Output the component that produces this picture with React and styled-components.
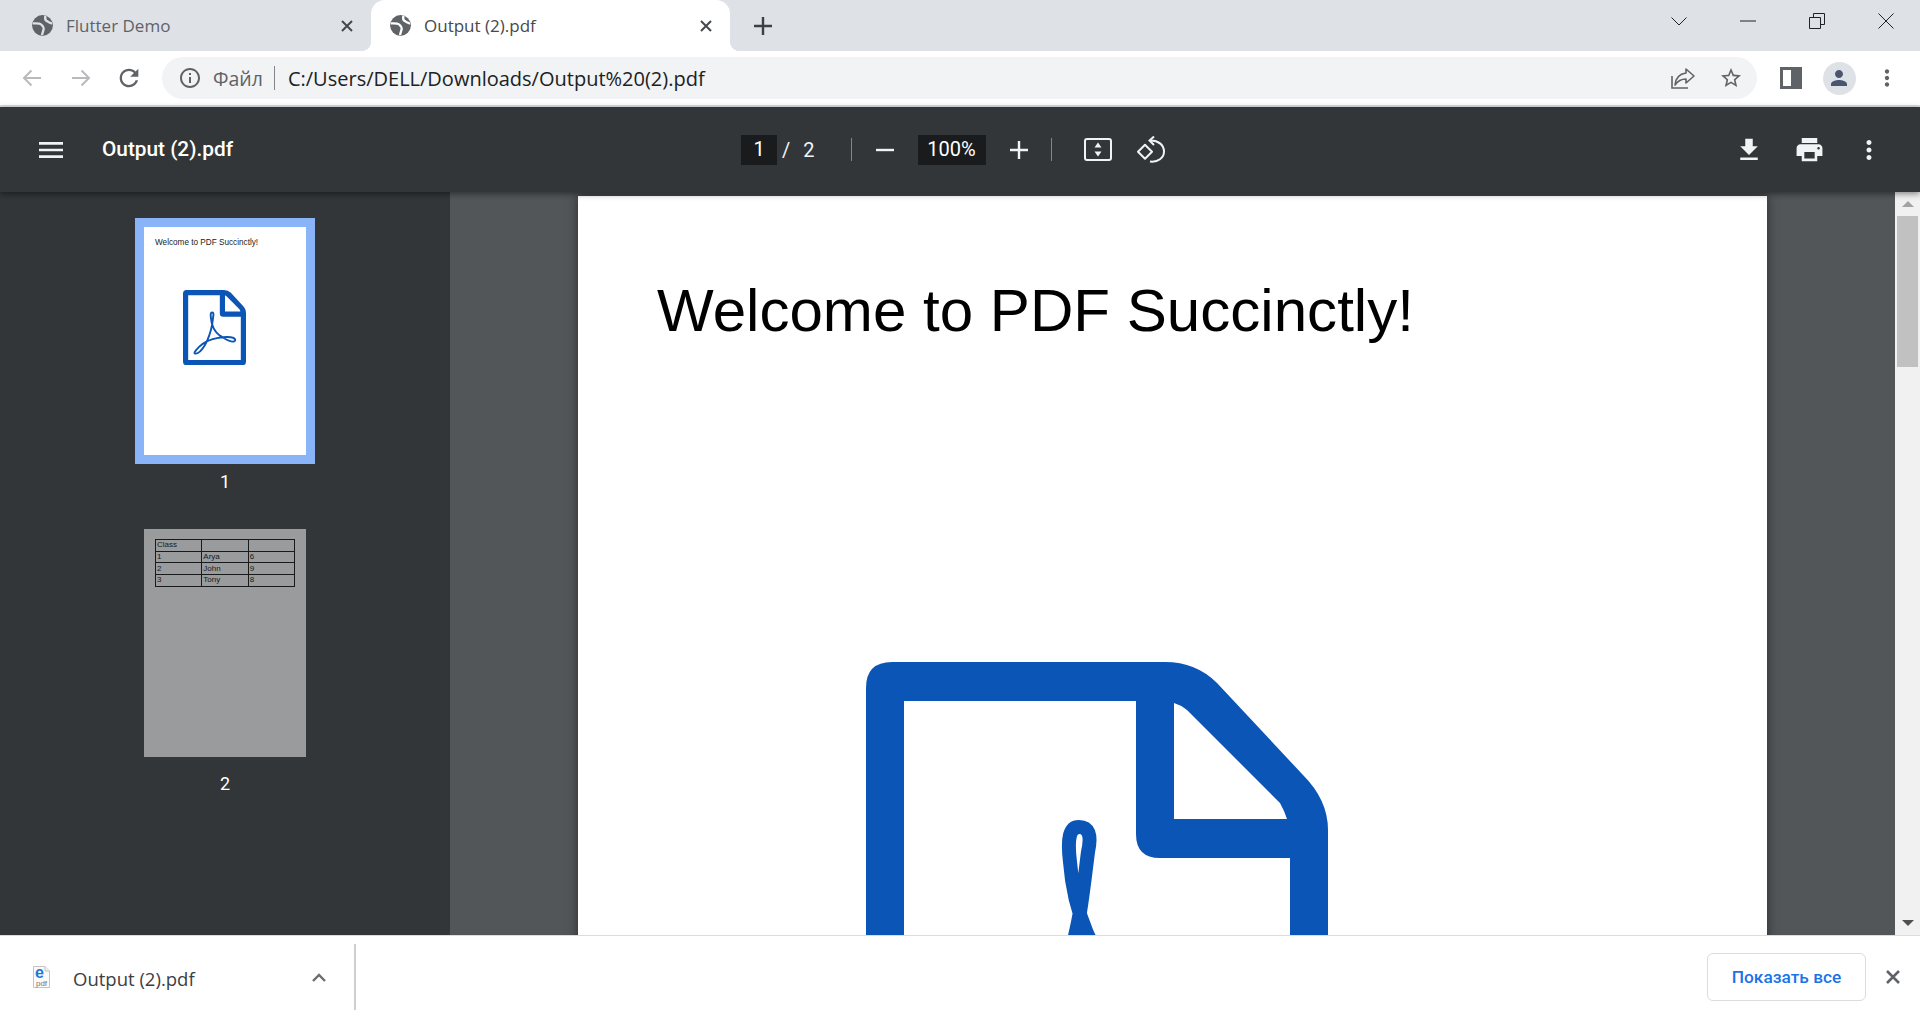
import React from 'react'
import styled, { createGlobalStyle } from 'styled-components'

const GlobalStyle = createGlobalStyle`
  html, body {
    margin: 0;
    padding: 0;
    height: 100%;
    overflow: hidden;
    background: #fff;
  }
  * {
    box-sizing: border-box;
  }
`

const PATHS = {
  reload: 'M17.65 6.35C16.2 4.9 14.21 4 12 4c-4.42 0-7.99 3.58-7.99 8s3.57 8 7.99 8c3.73 0 6.84-2.55 7.73-6h-2.08c-.82 2.33-3.04 4-5.65 4-3.31 0-6-2.69-6-6s2.69-6 6-6c1.66 0 3.14.69 4.22 1.78L13 11h7V4l-2.35 2.35z',
  info: 'M11 7h2v2h-2zm0 4h2v6h-2zm1-9C6.48 2 2 6.48 2 12s4.48 10 10 10 10-4.48 10-10S17.52 2 12 2zm0 18c-4.41 0-8-3.59-8-8s3.59-8 8-8 8 3.59 8 8-3.59 8-8 8z',
  star: 'M22 9.24l-7.19-.62L12 2 9.19 8.63 2 9.24l5.46 4.73L5.82 21 12 17.27 18.18 21l-1.63-7.03L22 9.24zM12 15.4l-3.76 2.27 1-4.28-3.32-2.88 4.38-.38L12 6.1l1.71 4.04 4.38.38-3.32 2.88 1 4.28L12 15.4z',
  person: 'M12 12c2.21 0 4-1.79 4-4s-1.79-4-4-4-4 1.79-4 4 1.79 4 4 4zm0 2c-2.67 0-8 1.34-8 4v2h16v-2c0-2.66-5.33-4-8-4z',
  menu: 'M3 18h18v-2H3v2zm0-5h18v-2H3v2zm0-7v2h18V6H3z',
  download: 'M19 9h-4V3H9v6H5l7 7 7-7zM5 18v2h14v-2H5z',
  print: 'M19 8H5c-1.66 0-3 1.34-3 3v6h4v4h12v-4h4v-6c0-1.66-1.34-3-3-3zm-3 11H8v-5h8v5zm3-7c-.55 0-1-.45-1-1s.45-1 1-1 1 .45 1 1-.45 1-1 1zm-1-9H6v4h12V3z',
  dots: 'M12 8c1.1 0 2-.9 2-2s-.9-2-2-2-2 .9-2 2 .9 2 2 2zm0 2c-1.1 0-2 .9-2 2s.9 2 2 2 2-.9 2-2-.9-2-2-2zm0 6c-1.1 0-2 .9-2 2s.9 2 2 2 2-.9 2-2-.9-2-2-2z'
}

function MaterialIcon ({ name, size = 24, color = 'currentColor' }) {
  return (
    <svg width={size} height={size} viewBox='0 0 24 24' fill={color}>
      <path d={PATHS[name]} />
    </svg>
  )
}

function LineIcon ({ size = 18, width = 2, color = 'currentColor', view = '0 0 18 18', children }) {
  return (
    <svg width={size} height={size} viewBox={view} fill='none' stroke={color} strokeWidth={width}>
      {children}
    </svg>
  )
}

function Globe ({ land }) {
  return (
    <svg width='25' height='25' viewBox='0 0 24 24' fill='none'>
      <circle cx='12' cy='12' r='10' fill='#5f6368' />
      <path
        stroke={land}
        strokeWidth='2.2'
        d='M2.6 10C6 9.8 9 9.6 10.4 10.8C12 12.2 13.4 13.2 13.2 15C13 17 11.8 18.6 11.6 21.4M14.8 2.6C14.4 4.4 14 6.2 15.6 7.4C17 8.6 19 9.6 21.2 10.2'
      />
    </svg>
  )
}

// the acrobat page drawing, same one for the big page and the thumbnail
function PdfDrawing ({ width }) {
  return (
    <svg width={width} viewBox='0 0 462 552' style={{ display: 'block' }} fill='none'>
      <path
        fill='#0a55b5'
        fillRule='evenodd'
        d='M26 0H299Q330 0 351 21L437 113Q462 138 462 168V526Q462 552 436 552H26Q0 552 0 526V26Q0 0 26 0ZM38 39V513H424V196H294Q270 196 270 172V39ZM308 41V157H421Q418 148 414 141L321 48Q315 43 308 41Z'
      />
      <path
        stroke='#0a55b5'
        strokeWidth='14'
        d='M222 190C226 172 222 165 213 165C204 165 201 175 204 200C207 240 222 300 271 335C300 350 340 385 372 378C392 372 385 350 350 346C300 340 200 355 145 395C100 430 74 462 88 466C105 470 135 445 160 405C185 360 205 300 214 250C218 225 220 205 222 190Z'
      />
    </svg>
  )
}

function FileGlyph () {
  return (
    <svg width='25' height='30' viewBox='-4 -4 25 30'>
      <path d='M.5.5H12L16.5 5V21.5H.5Z' fill='#fafafa' stroke='#c4c4c4' />
      <path d='M12 .5V5H16.5' fill='#eee' stroke='#c4c4c4' />
      <text x='6.5' y='11.5' fontFamily='Liberation Sans, sans-serif' fontWeight='700' fontSize='16' fill='#1a78d6' textAnchor='middle'>e</text>
      <text x='8.5' y='19.5' fontFamily='Liberation Sans, sans-serif' fontSize='8' fill='#777' textAnchor='middle'>pdf</text>
    </svg>
  )
}

function BrowserTab ({ title, width, paddingLeft, active }) {
  return (
    <Tab $width={width} $paddingLeft={paddingLeft} $active={active}>
      <Globe land={active ? '#fff' : '#dee1e6'} />
      <TabTitle>{title}</TabTitle>
      <LineIcon size={12} width={2} color='#45494d' view='0 0 12 12'>
        <path d='M1 1L11 11M11 1L1 11' />
      </LineIcon>
    </Tab>
  )
}

function ThumbRow ({ cells }) {
  return <tr>{cells.map((cell, i) => <ThumbCell key={i}>{cell}</ThumbCell>)}</tr>
}

export default function App () {
  return (
    <Window>
      <GlobalStyle />

      <TabStrip>
        <BrowserTab title='Flutter Demo' width={371} paddingLeft={30} />
        <BrowserTab title='Output (2).pdf' width={359} paddingLeft={17} active />
        <NewTab>
          <LineIcon size={18} width={2.4} color='#3c4043'>
            <path d='M9 0V18M0 9H18' />
          </LineIcon>
        </NewTab>
        <WindowControls>
          <ControlSlot>
            <LineIcon size={16} width={1} color='#222' view='0 0 16 16'><path d='M.5 4.5L8 12L15.5 4.5' /></LineIcon>
          </ControlSlot>
          <ControlSlot>
            <LineIcon size={16} width={1} color='#222' view='0 0 16 16'><path d='M0 8H16' /></LineIcon>
          </ControlSlot>
          <ControlSlot>
            <LineIcon size={16} width={1} color='#222' view='0 0 16 16'>
              <path d='M.5 4.5H11.5V15.5H.5ZM4.5 4V.5H15.5V11.5H12' />
            </LineIcon>
          </ControlSlot>
          <ControlSlot>
            <LineIcon size={16} width={1} color='#222' view='0 0 16 16'><path d='M.5 .5L15.5 15.5M15.5 .5L.5 15.5' /></LineIcon>
          </ControlSlot>
        </WindowControls>
      </TabStrip>

      <AddressRow>
        <NavSlot $width={48}>
          <LineIcon size={22} width={2} color='#b8babd' view='0 0 22 22'><path d='M20 11H3M10.5 3.5L3 11L10.5 18.5' /></LineIcon>
        </NavSlot>
        <NavSlot $width={49}>
          <LineIcon size={22} width={2} color='#b8babd' view='0 0 22 22'><path d='M2 11H19M11.5 3.5L19 11L11.5 18.5' /></LineIcon>
        </NavSlot>
        <NavSlot $width={48}><MaterialIcon name='reload' size={28} color='#5f6368' /></NavSlot>
        <Omnibox>
          <InfoSlot><MaterialIcon name='info' size={24} color='#5f6368' /></InfoSlot>
          <SchemeLabel>Файл</SchemeLabel>
          <OmniDivider />
          <UrlText>C:/Users/DELL/Downloads/Output%20(2).pdf</UrlText>
          <OmniActions>
            <NavSlot $width={24}>
              <svg width='24' height='22' viewBox='0 0 24 22' fill='none' stroke='#5f6368' strokeWidth='1.6'>
                <path d='M1 9V21H17' />
                <path d='M15 2L23 9L15 16V12C10 12 7 13.5 4 18C4.5 12 8 7 15 6Z' strokeLinejoin='round' />
              </svg>
            </NavSlot>
            <NavSlot $width={24}><MaterialIcon name='star' size={26} color='#5f6368' /></NavSlot>
          </OmniActions>
        </Omnibox>
        <ChromeActions>
          <NavSlot $width={48}><SidePanel /></NavSlot>
          <NavSlot $width={48}>
            <Avatar><MaterialIcon name='person' size={24} color='#4a5670' /></Avatar>
          </NavSlot>
          <NavSlot $width={48}><MaterialIcon name='dots' size={26} color='#5f6368' /></NavSlot>
        </ChromeActions>
      </AddressRow>

      <PdfToolbar>
        <ToolbarLeft>
          <MaterialIcon name='menu' size={32} color='#f1f3f4' />
          <DocTitle>Output (2).pdf</DocTitle>
        </ToolbarLeft>
        <InputBox $width={36}>1</InputBox>
        <Slash>/</Slash>
        <PageTotal>2</PageTotal>
        <ToolDivider $gap={36} />
        <ToolSlot $width={18} $left={24}>
          <LineIcon size={18} width={2.4} color='#f1f3f4'><path d='M0 9H18' /></LineIcon>
        </ToolSlot>
        <InputBox $width={68} $left={24}>100%</InputBox>
        <ToolSlot $width={18} $left={24}>
          <LineIcon size={18} width={2.4} color='#f1f3f4'><path d='M9 0V18M0 9H18' /></LineIcon>
        </ToolSlot>
        <ToolDivider $gap={23} />
        <ToolSlot $width={28} $left={32}>
          <svg width='28' height='23' viewBox='0 0 28 23' fill='none' stroke='#f1f3f4' strokeWidth='2'>
            <rect x='1' y='1' width='26' height='21' rx='2' />
            <path d='M14 4.5L10.5 9.5H17.5ZM14 18.5L10.5 13.5H17.5Z' fill='#f1f3f4' stroke='none' />
          </svg>
        </ToolSlot>
        <ToolSlot $width={28} $left={25}>
          <svg width='28' height='27' viewBox='0 0 28 27' fill='none' stroke='#f1f3f4' strokeWidth='2'>
            <path d='M1 15.7L8 8.7L15 15.7L8 22.7Z' strokeLinejoin='round' />
            <path d='M13 4.5C21 4 27 9 27 15.5C27 22 21 26.5 13 25.5' />
            <path d='M17 0.5L12.5 4.5L17 9' />
          </svg>
        </ToolSlot>
        <ToolbarRight>
          <ToolSlot $width={60}><MaterialIcon name='download' size={30} color='#f1f3f4' /></ToolSlot>
          <ToolSlot $width={60}><MaterialIcon name='print' size={31} color='#f1f3f4' /></ToolSlot>
          <ToolSlot $width={60}><MaterialIcon name='dots' size={30} color='#f1f3f4' /></ToolSlot>
        </ToolbarRight>
      </PdfToolbar>

      <Viewer>
        <Sidebar>
          <Thumb>
            <ThumbFrame $selected>
              <ThumbPage>
                <ThumbHeading>Welcome to PDF Succinctly!</ThumbHeading>
                <ThumbDrawing><PdfDrawing width={63} /></ThumbDrawing>
              </ThumbPage>
            </ThumbFrame>
            <ThumbLabel>1</ThumbLabel>
          </Thumb>
          <Thumb>
            <ThumbFrame>
              <ThumbPage $dim>
                <ThumbTable>
                  <tbody>
                    <ThumbRow cells={['Class', '', '']} />
                    <ThumbRow cells={['1', 'Arya', '6']} />
                    <ThumbRow cells={['2', 'John', '9']} />
                    <ThumbRow cells={['3', 'Tony', '8']} />
                  </tbody>
                </ThumbTable>
              </ThumbPage>
            </ThumbFrame>
            <ThumbLabel>2</ThumbLabel>
          </Thumb>
        </Sidebar>

        <PageArea>
          <Page>
            <PageHeading>Welcome to PDF Succinctly!</PageHeading>
            <PageDrawing><PdfDrawing width={462} /></PageDrawing>
          </Page>
        </PageArea>

        <Scrollbar>
          <ArrowUp />
          <ScrollThumb />
          <ArrowDown />
        </Scrollbar>
      </Viewer>

      <DownloadBar>
        <DownloadItem>
          <FileGlyph />
          <FileName>Output (2).pdf</FileName>
          <LineIcon size={16} width={2.4} color='#6a6d71' view='0 0 16 10'>
            <path d='M2 9L8 3L14 9' />
          </LineIcon>
        </DownloadItem>
        <BarDivider />
        <ShowAll>Показать все</ShowAll>
        <BarClose>
          <LineIcon size={14} width={2.6} color='#5f6368' view='0 0 14 14'>
            <path d='M1 1L13 13M13 1L1 13' />
          </LineIcon>
        </BarClose>
      </DownloadBar>
    </Window>
  )
}

const Window = styled.div`
  display: flex;
  flex-direction: column;
  width: 1920px;
  height: 1018px;
  overflow: hidden;
  font-family: 'Roboto', 'Liberation Sans', sans-serif;
`

const TabStrip = styled.div`
  display: flex;
  align-items: stretch;
  flex: none;
  height: 51px;
  background: #dee1e6;
`

const Tab = styled.div`
  position: relative;
  display: flex;
  align-items: center;
  flex: none;
  width: ${props => props.$width}px;
  padding: 0 18px 0 ${props => props.$paddingLeft}px;
  color: ${props => props.$active ? '#45494d' : '#5f6368'};
  background: ${props => props.$active ? '#fff' : 'transparent'};
  border-radius: 14px 14px 0 0;

  ${props => props.$active && `
    &::before, &::after {
      content: '';
      position: absolute;
      bottom: 0;
      width: 10px;
      height: 10px;
    }
    &::before {
      left: -10px;
      background: radial-gradient(circle at 0 0, #dee1e6 10px, #fff 10.5px);
    }
    &::after {
      right: -10px;
      background: radial-gradient(circle at 100% 0, #dee1e6 10px, #fff 10.5px);
    }
  `}
`

const TabTitle = styled.span`
  flex: 1;
  margin-left: 11px;
  font-family: 'Open Sans', 'Liberation Sans', sans-serif;
  font-size: 17px;
`

const NewTab = styled.div`
  display: flex;
  align-items: center;
  margin-left: 24px;
`

const WindowControls = styled.div`
  display: flex;
  margin-left: auto;
  height: 42px;
`

const ControlSlot = styled.div`
  display: flex;
  align-items: center;
  justify-content: center;
  width: 69px;
`

const AddressRow = styled.div`
  display: flex;
  align-items: center;
  flex: none;
  height: 56px;
  padding-left: 8px;
  background: #fff;
  border-bottom: 2px solid #dadce0;
`

const NavSlot = styled.div`
  display: flex;
  align-items: center;
  justify-content: center;
  flex: none;
  width: ${props => props.$width}px;
`

const Omnibox = styled.div`
  display: flex;
  align-items: center;
  flex: none;
  width: 1595px;
  height: 42px;
  margin-left: 9px;
  padding: 0 14px 0 16px;
  background: #f1f3f4;
  border-radius: 21px;
`

const InfoSlot = styled.div`
  display: flex;
  flex: none;
`

const SchemeLabel = styled.span`
  margin-left: 11px;
  font-family: 'Open Sans', 'Liberation Sans', sans-serif;
  font-size: 19.5px;
  color: #5f6368;
`

const OmniDivider = styled.div`
  width: 1px;
  height: 24px;
  margin-left: 11px;
  background: #80868b;
`

const UrlText = styled.span`
  margin-left: 13px;
  font-family: 'Open Sans', 'Liberation Sans', sans-serif;
  font-size: 20px;
  color: #202124;
`

const OmniActions = styled.div`
  display: flex;
  gap: 24px;
  margin-left: auto;
`

const ChromeActions = styled.div`
  display: flex;
  margin-left: 10px;
`

const SidePanel = styled.div`
  width: 22px;
  height: 22px;
  background: #fff;
  border: 3px solid #5f6368;
  border-right-width: 11px;
`

const Avatar = styled.div`
  display: flex;
  align-items: center;
  justify-content: center;
  width: 33px;
  height: 33px;
  background: #dee1e6;
  border-radius: 50%;
`

const PdfToolbar = styled.div`
  position: relative;
  z-index: 2;
  display: flex;
  align-items: center;
  flex: none;
  height: 85px;
  color: #f1f3f4;
  background: #323639;
  box-shadow: 0 2px 6px rgba(0, 0, 0, 0.45);
`

const ToolbarLeft = styled.div`
  display: flex;
  align-items: center;
  flex: none;
  width: 741px;
  padding-left: 35px;
`

const DocTitle = styled.span`
  margin: 0 0 2px 35px;
  font-size: 20.8px;
  font-weight: 500;
  color: #fff;
`

const InputBox = styled.div`
  flex: none;
  width: ${props => props.$width}px;
  height: 30px;
  margin-left: ${props => props.$left || 0}px;
  font-size: 20px;
  line-height: 29px;
  text-align: center;
  color: #fff;
  background: #191b1c;
`

const Slash = styled.span`
  margin-left: 5px;
  font-size: 20px;
  color: #f1f3f4;
`

const PageTotal = styled.span`
  margin-left: 13px;
  font-size: 20px;
  color: #f1f3f4;
`

const ToolDivider = styled.div`
  flex: none;
  width: 1px;
  height: 23px;
  margin-left: ${props => props.$gap}px;
  background: #80868b;
`

const ToolSlot = styled.div`
  display: flex;
  align-items: center;
  justify-content: center;
  flex: none;
  width: ${props => props.$width}px;
  margin-left: ${props => props.$left || 0}px;
`

const ToolbarRight = styled.div`
  display: flex;
  margin-left: auto;
  padding-right: 21px;
`

const Viewer = styled.div`
  display: flex;
  flex: 1;
  min-height: 0;
`

const Sidebar = styled.div`
  flex: none;
  width: 450px;
  padding-top: 26px;
  background: #323639;
`

const Thumb = styled.div`
  display: flex;
  flex-direction: column;
  align-items: center;
`

const ThumbFrame = styled.div`
  width: 180px;
  height: 246px;
  border: 9px solid ${props => props.$selected ? '#8ab4f8' : 'transparent'};
`

const ThumbPage = styled.div`
  display: flow-root;
  height: 100%;
  padding: 0 11px;
  background: #fff;
  opacity: ${props => props.$dim ? 0.5 : 1};
`

const ThumbHeading = styled.div`
  padding-top: 11px;
  font-family: 'Liberation Sans', sans-serif;
  font-size: 8.2px;
  line-height: 10px;
  color: #222;
  white-space: nowrap;
`

const ThumbDrawing = styled.div`
  margin: 42px 0 0 28px;
`

const ThumbTable = styled.table`
  width: 140px;
  margin-top: 10px;
  border-collapse: collapse;
  table-layout: fixed;
  font-family: 'Liberation Sans', sans-serif;
  font-size: 8px;
  color: #000;
`

const ThumbCell = styled.td`
  height: 11.7px;
  padding: 0 1px;
  line-height: 10px;
  border: 1.5px solid #000;
`

const ThumbLabel = styled.div`
  height: 56px;
  padding-top: 6px;
  font-size: 18px;
  line-height: 24px;
  text-align: center;
  color: #fff;
`

const PageArea = styled.div`
  display: flex;
  justify-content: center;
  flex: 1;
  min-width: 0;
  padding-top: 4px;
  overflow: hidden;
  background: #525659;
`

const Page = styled.div`
  flex: none;
  width: 1189px;
  height: 1682px;
  padding-left: 79px;
  background: #fff;
  box-shadow: 0 0 10px rgba(0, 0, 0, 0.5);
`

const PageHeading = styled.div`
  padding-top: 78px;
  font-family: 'Liberation Sans', sans-serif;
  font-size: 60.1px;
  line-height: 74px;
  color: #000;
  white-space: nowrap;
`

const PageDrawing = styled.div`
  margin: 314px 0 0 209px;
`

const Scrollbar = styled.div`
  display: flex;
  flex-direction: column;
  align-items: center;
  flex: none;
  width: 25px;
  background: #f1f1f1;
`

const ArrowUp = styled.div`
  width: 0;
  height: 0;
  margin-top: 9px;
  border: 6px solid transparent;
  border-top: 0;
  border-bottom: 6px solid #a3a3a3;
`

const ScrollThumb = styled.div`
  width: 21px;
  height: 151px;
  margin-top: 9px;
  background: #c1c1c1;
`

const ArrowDown = styled.div`
  width: 0;
  height: 0;
  margin-top: auto;
  margin-bottom: 9px;
  border: 6px solid transparent;
  border-bottom: 0;
  border-top: 6px solid #505050;
`

const DownloadBar = styled.div`
  position: relative;
  z-index: 3;
  display: flex;
  align-items: center;
  flex: none;
  height: 83px;
  padding-left: 29px;
  background: #fff;
  border-top: 1px solid #dadce0;
`

const DownloadItem = styled.div`
  display: flex;
  align-items: center;
  flex: none;
  width: 298px;
`

const FileName = styled.span`
  flex: 1;
  margin: 2px 0 0 19px;
  font-family: 'Open Sans', 'Liberation Sans', sans-serif;
  font-size: 18.5px;
  color: #3c4043;
`

const BarDivider = styled.div`
  flex: none;
  width: 2px;
  height: 66px;
  margin-left: 27px;
  background: #cfcfcf;
`

const ShowAll = styled.div`
  display: flex;
  align-items: center;
  justify-content: center;
  flex: none;
  width: 159px;
  height: 48px;
  margin-left: auto;
  font-size: 17.3px;
  font-weight: 500;
  color: #1a73e8;
  background: #fff;
  border: 1px solid #dadce0;
  border-radius: 6px;
`

const BarClose = styled.div`
  display: flex;
  align-items: center;
  justify-content: center;
  flex: none;
  width: 54px;
`
